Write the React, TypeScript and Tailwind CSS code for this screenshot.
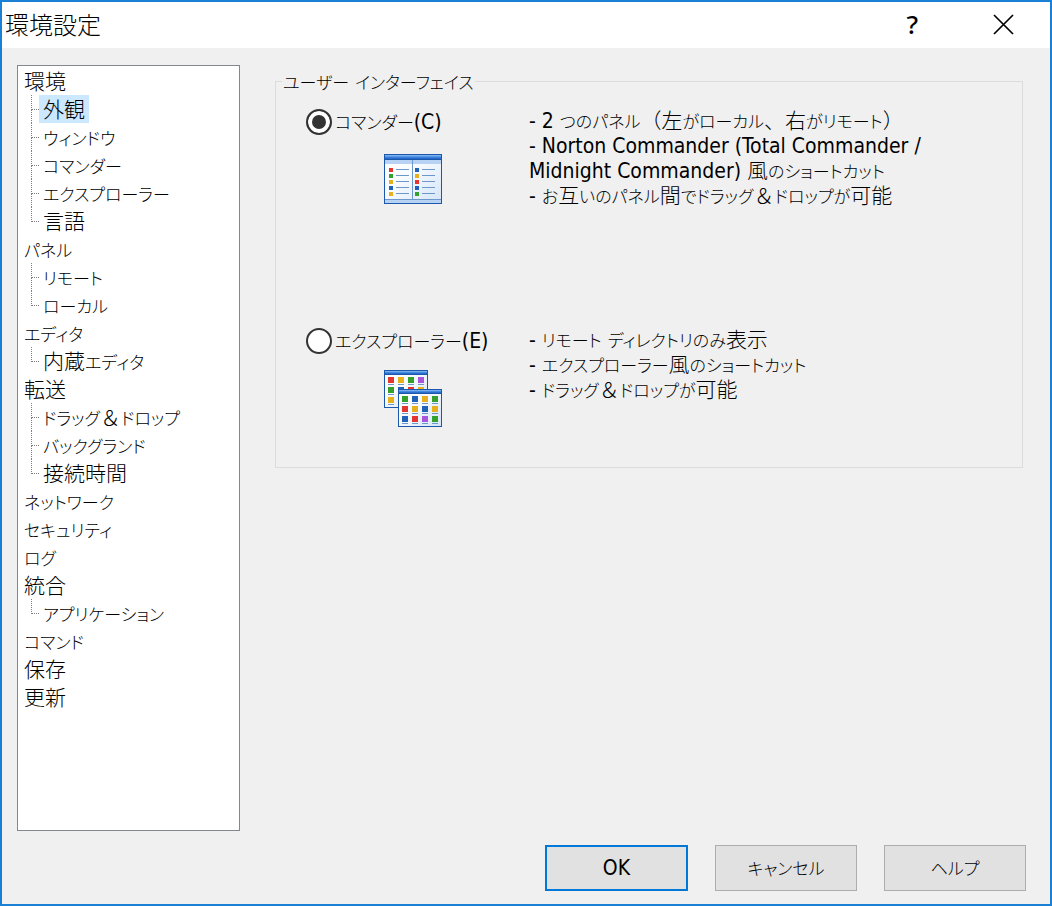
import { useState, type ReactNode } from "react";

type Node = { label: string; children?: string[] };

const TREE: Node[] = [
  { label: "環境", children: ["外観", "ウィンドウ", "コマンダー", "エクスプローラー", "言語"] },
  { label: "パネル", children: ["リモート", "ローカル"] },
  { label: "エディタ", children: ["内蔵エディタ"] },
  { label: "転送", children: ["ドラッグ＆ドロップ", "バックグランド", "接続時間"] },
  { label: "ネットワーク" },
  { label: "セキュリティ" },
  { label: "ログ" },
  { label: "統合", children: ["アプリケーション"] },
  { label: "コマンド" },
  { label: "保存" },
  { label: "更新" },
];

const RED = "#e5352f";
const GREEN = "#35a02c";
const YELLOW = "#e8b01a";
const BLUE = "#1f62b8";
const PURPLE = "#ab55dc";

const RUNS = /[\u3040-\u30ff]+|[^\u3040-\u30ff\s]*\s+|[^\u3040-\u30ff\s]+/g;
const KANA = /^[\u3040-\u30ff]/;

// Kana are set smaller and proportionally spaced; kanji and Latin keep the base size.
function Mixed({ children }: { children: string }) {
  return (
    <span>
      {(children.match(RUNS) ?? []).map((run, i) =>
        KANA.test(run) ? (
          <span key={i} className="text-[17px] leading-none [font-feature-settings:'palt']">
            {run}
          </span>
        ) : (
          run
        ),
      )}
    </span>
  );
}

function CommanderIcon() {
  const left = [RED, GREEN, YELLOW, BLUE, YELLOW];
  const right = [BLUE, YELLOW, RED, BLUE, GREEN];
  return (
    <svg width="58" height="50" viewBox="0 0 58 50" aria-hidden="true">
      <defs>
        <linearGradient id="bar" x1="0" y1="0" x2="0" y2="1">
          <stop offset="0" stopColor="#8fc0f5" />
          <stop offset="0.5" stopColor="#4389e0" />
          <stop offset="1" stopColor="#1c5fc4" />
        </linearGradient>
        <linearGradient id="pane" x1="0" y1="0" x2="1" y2="1">
          <stop offset="0" stopColor="#ffffff" />
          <stop offset="0.4" stopColor="#f8fbff" />
          <stop offset="1" stopColor="#d3e4f8" />
        </linearGradient>
      </defs>
      <rect x="0.5" y="0.5" width="57" height="49" fill="url(#pane)" stroke="#1b57ab" />
      <rect x="1" y="1" width="56" height="4" fill="url(#bar)" />
      <path d="M0 5.5H58" stroke="#1b57ab" />
      <rect x="1" y="6" width="56" height="4" fill="#b7d2f2" />
      <rect x="1" y="46" width="56" height="3" fill="#b7d2f2" />
      <path d="M1 45.5H57M28.5 6V45" stroke="#6d98cc" />
      {left.map((c, i) => (
        <g key={i}>
          <rect x="5" y={14 + i * 6} width="4" height="4" fill={c} />
          <rect x="12" y={15 + i * 6} width="13" height="1" fill="#6d98cc" />
          <rect x="31" y={14 + i * 6} width="4" height="4" fill={right[i]} />
          <rect x="38" y={15 + i * 6} width="13" height="1" fill="#6d98cc" />
        </g>
      ))}
    </svg>
  );
}

function ExplorerIcon() {
  const back = [
    [RED, YELLOW, GREEN, PURPLE],
    [GREEN, BLUE, RED, YELLOW],
    [YELLOW],
  ];
  const front = [
    [GREEN, BLUE, YELLOW, GREEN],
    [RED, YELLOW, BLUE, YELLOW],
    [BLUE, RED, PURPLE, GREEN],
  ];
  const pane = (rows: string[][]) => (
    <>
      <rect x="0.5" y="0.5" width="43" height="37" fill="url(#pane)" stroke="#1b57ab" />
      <rect x="1" y="1" width="42" height="3" fill="url(#bar)" />
      <path d="M0 4.5H44" stroke="#1b57ab" />
      {rows.map((row, y) =>
        row.map((c, x) => (
          <g key={`${x}-${y}`}>
            <rect x={4 + x * 10} y={7 + y * 10} width="6" height="6" fill={c} />
            <rect x={4 + x * 10} y={14 + y * 10} width="6" height="1" fill="#6d98cc" />
          </g>
        )),
      )}
    </>
  );
  return (
    <svg width="58" height="57" viewBox="0 0 58 57" aria-hidden="true">
      {pane(back)}
      <g transform="translate(14 19)">{pane(front)}</g>
    </svg>
  );
}

function Branch({ last }: { last: boolean }) {
  return (
    <span className="flex h-7 w-2 flex-col" aria-hidden="true">
      <span className="h-[15px] border-b border-l border-dotted border-[#808080]" />
      {!last && <span className="flex-1 border-l border-dotted border-[#808080]" />}
    </span>
  );
}

function TreeItem({ label, active, onSelect }: { label: string; active: boolean; onSelect: (l: string) => void }) {
  return (
    <button
      type="button"
      onClick={() => onSelect(label)}
      className={
        active ? "block h-7 bg-[#cce8ff] px-1 pt-[2px] leading-[26px]" : "block h-7 px-1 pt-[2px] leading-[26px]"
      }
    >
      <Mixed>{label}</Mixed>
    </button>
  );
}

function Option({
  value,
  label,
  lines,
  icon,
  checked,
  onChange,
}: {
  value: string;
  label: string;
  lines: string[];
  icon: ReactNode;
  checked: boolean;
  onChange: (v: string) => void;
}) {
  return (
    <div className="flex h-[219px]">
      <div className="w-[223px] shrink-0">
        <label className="flex h-7 items-center gap-[3px]">
          <input
            type="radio"
            name="interface"
            value={value}
            checked={checked}
            onChange={() => onChange(value)}
            className="size-[26px] shrink-0 appearance-none rounded-full border-2 border-[#333] bg-white checked:bg-[#333] checked:shadow-[inset_0_0_0_4px_#fff]"
          />
          <span className="pt-[2px]">
            <Mixed>{label}</Mixed>
          </span>
        </label>
        <div className="ml-[78px] flex h-[86px] items-center">{icon}</div>
      </div>
      <ul className="max-w-[420px] min-w-0 pt-px leading-[25px]">
        {lines.map((line) => (
          <li key={line}>
            <Mixed>{line}</Mixed>
          </li>
        ))}
      </ul>
    </div>
  );
}

export default function App() {
  const [page, setPage] = useState("外観");
  const [mode, setMode] = useState("commander");

  return (
    <div
      lang="ja"
      className="flex min-h-screen flex-col border-2 border-[#1a80d6] bg-[#f0f0f0] font-['DejaVu_Sans_Condensed','Noto_Sans_CJK_JP',sans-serif] text-[21px] font-light text-black"
    >
      <header className="flex h-[46px] items-center bg-white pr-9 pb-[2px] pl-[3px]">
        <h1 className="flex-1 font-['Noto_Sans_CJK_JP',sans-serif] text-[24px]">環境設定</h1>
        <button type="button" aria-label="ヘルプ" className="mr-[75px] font-['Noto_Sans',sans-serif] text-[26px] font-medium">
          ?
        </button>
        <button type="button" aria-label="閉じる">
          <svg width="21" height="21" viewBox="0 0 21 21" fill="none" stroke="#000" strokeWidth="1.7" aria-hidden="true">
            <path d="M1 1L20 20M20 1L1 20" />
          </svg>
        </button>
      </header>

      <main className="flex flex-1 flex-col pt-[17px] pb-[13px] pl-[15px]">
        <div className="flex flex-1 gap-[35px]">
          <nav className="w-[223px] shrink-0 border border-[#828790] bg-white pt-px">
            <ul>
              {TREE.map((node) => (
                <li key={node.label} className="pl-[2px]">
                  <TreeItem label={node.label} active={page === node.label} onSelect={setPage} />
                  {node.children && (
                    <ul className="pl-[11px]">
                      {node.children.map((child, i) => (
                        <li key={child} className="flex">
                          <Branch last={i === node.children!.length - 1} />
                          <TreeItem label={child} active={page === child} onSelect={setPage} />
                        </li>
                      ))}
                    </ul>
                  )}
                </li>
              ))}
            </ul>
          </nav>

          <section className="min-w-0 flex-1 pt-[2px] pr-[27px]">
            <fieldset className="h-[401px] border border-[#dcdcdc] pl-[30px]">
              <legend className="-ml-[24px] px-px pt-[2px] leading-[26px]">
                <Mixed>ユーザー インターフェイス</Mixed>
              </legend>
              <div className="pt-[13px]">
                <Option
                  value="commander"
                  label="コマンダー(C)"
                  icon={<CommanderIcon />}
                  checked={mode === "commander"}
                  onChange={setMode}
                  lines={[
                    "- 2 つのパネル（左がローカル、右がリモート）",
                    "- Norton Commander (Total Commander / Midnight Commander) 風のショートカット",
                    "- お互いのパネル間でドラッグ＆ドロップが可能",
                  ]}
                />
                <Option
                  value="explorer"
                  label="エクスプローラー(E)"
                  icon={<ExplorerIcon />}
                  checked={mode === "explorer"}
                  onChange={setMode}
                  lines={["- リモート ディレクトリのみ表示", "- エクスプローラー風のショートカット", "- ドラッグ＆ドロップが可能"]}
                />
              </div>
            </fieldset>
          </section>
        </div>

        <footer className="mt-[14px] flex justify-end gap-[27px] pr-6">
          <button type="button" className="h-[46px] w-[143px] border-2 border-[#0078d7] bg-[#e1e1e1] pt-[2px]">
            OK
          </button>
          <button type="button" className="h-[46px] w-[142px] border border-[#adadad] bg-[#e1e1e1] pt-[2px]">
            <Mixed>キャンセル</Mixed>
          </button>
          <button type="button" className="h-[46px] w-[142px] border border-[#adadad] bg-[#e1e1e1] pt-[2px]">
            <Mixed>ヘルプ</Mixed>
          </button>
        </footer>
      </main>
    </div>
  );
}
